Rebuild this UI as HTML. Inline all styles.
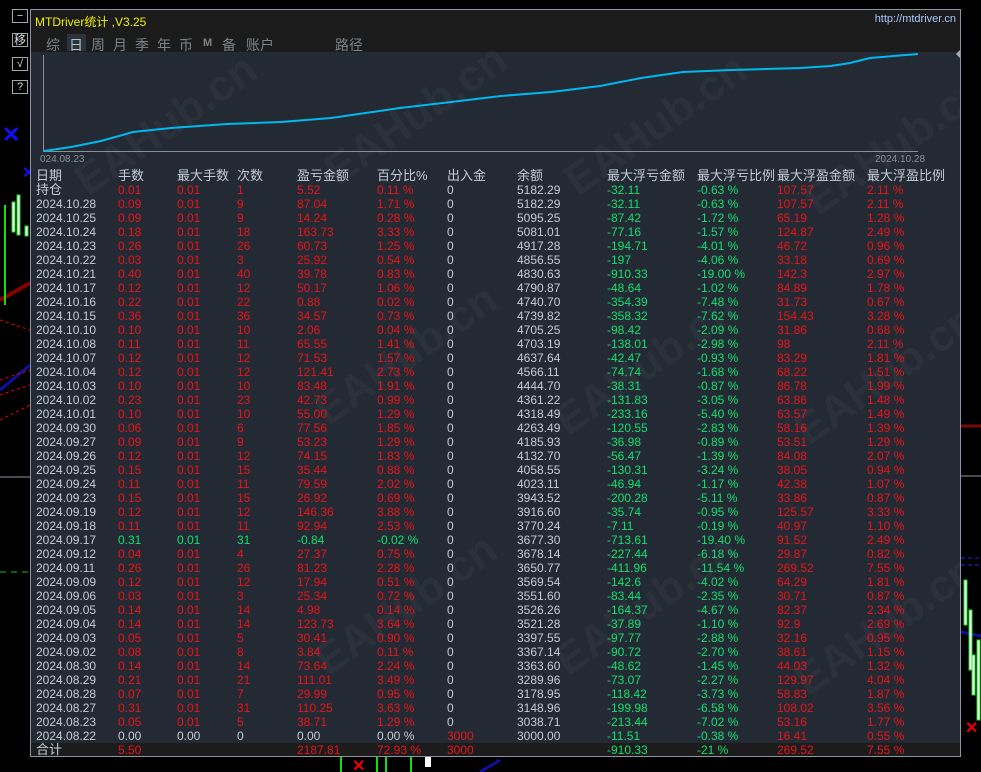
<!DOCTYPE html>
<html><head><meta charset="utf-8">
<style>
*{margin:0;padding:0;box-sizing:border-box}
body{width:981px;height:772px;background:#000;position:relative;overflow:hidden;font-family:"Liberation Sans","Noto Sans CJK SC",sans-serif}
.abs{position:absolute}
#panel{position:absolute;left:30px;top:9px;width:931px;height:748px;border:1px solid #8a94a6;background:#232a33;overflow:hidden}
#title{position:absolute;left:0;top:0;width:929px;height:42px;background:#1b1b1b}
#foot{position:absolute;left:0;top:733px;width:929px;height:14px;background:#1c1c1c}
.r{position:absolute;left:0;height:14px;width:929px;font-size:12px;line-height:14px;color:#c3ccd8}
.r span{position:absolute;top:0;white-space:nowrap}
.a{left:5px}.b{left:87px}.c{left:146px}.d{left:206px}.e{left:266px}.f{left:346px}.g{left:416px}.h{left:486px}.i{left:576px}.j{left:666px}.k{left:746px}.l{left:836px}
.R{color:#e8141a}.G{color:#10e070}
.hd{font-size:13px}
.tab{position:absolute;top:25px;font-size:14px;color:#7d838b}
.wm{position:absolute;font-size:44px;font-weight:bold;color:rgba(255,255,255,0.035);transform:rotate(-35deg);white-space:nowrap;font-family:"Liberation Sans",sans-serif}
.btn{position:absolute;left:12px;width:16px;height:14px;border:1px solid #9aa;background:#000;color:#ddd;font-size:11px;line-height:12px;text-align:center}
</style></head><body>
<svg class="abs" style="left:0;top:0" width="981" height="772">
<line x1="0" y1="477" x2="30" y2="477" stroke="#8a94a6"/>
<line x1="961" y1="476" x2="981" y2="476" stroke="#8a94a6"/>
<line x1="961" y1="426" x2="981" y2="426" stroke="#7a0a0a" stroke-width="3"/>
<line x1="0" y1="572" x2="30" y2="572" stroke="#10c010" stroke-dasharray="6,5"/>
<line x1="0" y1="300" x2="30" y2="283" stroke="#800" stroke-width="4"/>
<line x1="0" y1="390" x2="30" y2="365" stroke="#1010a0" stroke-width="3"/>
<line x1="0" y1="320" x2="30" y2="330" stroke="#e00" stroke-dasharray="3,3"/>
<line x1="0" y1="380" x2="30" y2="370" stroke="#e00" stroke-dasharray="3,3"/>
<line x1="0" y1="395" x2="30" y2="385" stroke="#e00" stroke-dasharray="3,3"/>
<line x1="0" y1="420" x2="30" y2="405" stroke="#e00" stroke-dasharray="3,3"/>
<line x1="961" y1="632" x2="981" y2="636" stroke="#1010a0" stroke-width="3"/>
<line x1="961" y1="558" x2="981" y2="558" stroke="#22f" stroke-dasharray="4,3"/>
<line x1="961" y1="565" x2="981" y2="565" stroke="#22f" stroke-dasharray="4,3"/>
<rect x="4" y="205" width="2" height="100" fill="#10e010"/>
<rect x="12" y="202" width="3" height="30" fill="#fff" stroke="#10e010"/>
<rect x="17" y="195" width="3" height="40" fill="#fff" stroke="#10e010"/>
<rect x="25" y="226" width="3" height="10" fill="#fff" stroke="#10e010"/>
<rect x="964" y="580" width="3" height="45" fill="#fff" stroke="#10e010"/>
<rect x="969" y="610" width="3" height="60" fill="#fff" stroke="#10e010"/>
<rect x="972" y="655" width="3" height="40" fill="#fff" stroke="#10e010"/>
<rect x="977" y="640" width="3" height="80" fill="#fff" stroke="#10e010"/>
<rect x="376" y="757" width="2" height="15" fill="#10e010"/><rect x="385" y="757" width="2" height="15" fill="#10e010"/>
<rect x="410" y="757" width="2" height="15" fill="#10e010"/><rect x="425" y="757" width="6" height="10" fill="#fff"/>
<rect x="340" y="757" width="2" height="15" fill="#10e010"/>
<text x="352" y="771" fill="#e00" font-size="16" font-weight="bold" font-family="Liberation Sans">✕</text>
<line x1="480" y1="772" x2="500" y2="760" stroke="#1010a0" stroke-width="3"/>
<text x="2" y="142" fill="#1010ff" font-size="22" font-weight="bold" font-family="Liberation Sans">✕</text>
<text x="22" y="178" fill="#1010ff" font-size="16" font-weight="bold" font-family="Liberation Sans">✕</text>
<text x="965" y="733" fill="#e00" font-size="16" font-weight="bold" font-family="Liberation Sans">✕</text>
</svg>
<div class="btn" style="top:9px">−</div>
<div class="btn" style="top:33px;font-size:12px">移</div>
<div class="btn" style="top:57px">√</div>
<div class="btn" style="top:80px">?</div>

<div id="panel">
<div id="title">
<div class="abs" style="left:4px;top:3px;font-size:12px;color:#f0f000">MTDriver统计 ,V3.25</div>
<div class="abs" style="right:4px;top:3px;font-size:11px;color:#a8c8ff">http://mtdriver.cn</div>
<div class="abs" style="left:36px;top:24px;width:19px;height:17px;background:#2b333d"></div>
<span class="tab" style="left:15px">综</span><span class="tab" style="left:38px;color:#b8bec6">日</span><span class="tab" style="left:60px">周</span><span class="tab" style="left:82px">月</span><span class="tab" style="left:104px">季</span><span class="tab" style="left:126px">年</span><span class="tab" style="left:148px">币</span><span class="tab" style="left:172px;font-size:11px;top:27px;font-weight:bold">M</span><span class="tab" style="left:191px">备</span><span class="tab" style="left:215px">账户</span><span class="tab" style="left:304px">路径</span>
</div>
<div class="wm" style="left:30px;top:90px">EAHub.cn</div>
<div class="wm" style="left:280px;top:80px">EAHub.cn</div>
<div class="wm" style="left:520px;top:90px">EAHub.cn</div>
<div class="wm" style="left:760px;top:110px">EAHub.cn</div>
<div class="wm" style="left:270px;top:320px">EAHub.cn</div>
<div class="wm" style="left:510px;top:330px">EAHub.cn</div>
<div class="wm" style="left:750px;top:340px">EAHub.cn</div>
<div class="wm" style="left:270px;top:570px">EAHub.cn</div>
<div class="wm" style="left:510px;top:570px">EAHub.cn</div>
<div class="wm" style="left:750px;top:590px">EAHub.cn</div>
<svg class="abs" style="left:0;top:0" width="929" height="160">
<line x1="12.5" y1="45" x2="12.5" y2="142" stroke="#8a8f96"/>
<line x1="12" y1="141.5" x2="887" y2="141.5" stroke="#8a8f96"/>
<polyline fill="none" stroke="#00b8f0" stroke-width="2" points="13,141 40,137 70,131 102,122 140,118 196,114 250,112 300,108 369,98 420,92 470,86 520,82 569,76 610,68 652,62 700,60 769,58 800,56 819,53 839,48 887,44"/>
<path d="M931,38 l-6,6 l6,6z" fill="#aab"/>
<text x="9" y="152" fill="#8a8f96" font-size="10" font-family="Liberation Sans">024.08.23</text>
<text x="844" y="152" fill="#8a8f96" font-size="10" font-family="Liberation Sans">2024.10.28</text>
</svg>
<div id="foot"></div>

<div class="r hd" style="top:159px"><span class="a">日期</span><span class="b">手数</span><span class="c">最大手数</span><span class="d">次数</span><span class="e">盈亏金额</span><span class="f">百分比%</span><span class="g">出入金</span><span class="h">余额</span><span class="i">最大浮亏金额</span><span class="j">最大浮亏比例</span><span class="k">最大浮盈金额</span><span class="l">最大浮盈比例</span></div>
<div class="r" style="top:173px"><span class="a hd">持仓</span><span class="b R">0.01</span><span class="c R">0.01</span><span class="d R">1</span><span class="e R">5.52</span><span class="f R">0.11 %</span><span class="g">0</span><span class="h">5182.29</span><span class="i G">-32.11</span><span class="j G">-0.63 %</span><span class="k R">107.57</span><span class="l R">2.11 %</span></div>
<div class="r" style="top:187px"><span class="a">2024.10.28</span><span class="b R">0.09</span><span class="c R">0.01</span><span class="d R">9</span><span class="e R">87.04</span><span class="f R">1.71 %</span><span class="g">0</span><span class="h">5182.29</span><span class="i G">-32.11</span><span class="j G">-0.63 %</span><span class="k R">107.57</span><span class="l R">2.11 %</span></div>
<div class="r" style="top:201px"><span class="a">2024.10.25</span><span class="b R">0.09</span><span class="c R">0.01</span><span class="d R">9</span><span class="e R">14.24</span><span class="f R">0.28 %</span><span class="g">0</span><span class="h">5095.25</span><span class="i G">-87.42</span><span class="j G">-1.72 %</span><span class="k R">65.19</span><span class="l R">1.28 %</span></div>
<div class="r" style="top:215px"><span class="a">2024.10.24</span><span class="b R">0.18</span><span class="c R">0.01</span><span class="d R">18</span><span class="e R">163.73</span><span class="f R">3.33 %</span><span class="g">0</span><span class="h">5081.01</span><span class="i G">-77.16</span><span class="j G">-1.57 %</span><span class="k R">124.87</span><span class="l R">2.49 %</span></div>
<div class="r" style="top:229px"><span class="a">2024.10.23</span><span class="b R">0.26</span><span class="c R">0.01</span><span class="d R">26</span><span class="e R">60.73</span><span class="f R">1.25 %</span><span class="g">0</span><span class="h">4917.28</span><span class="i G">-194.71</span><span class="j G">-4.01 %</span><span class="k R">46.72</span><span class="l R">0.96 %</span></div>
<div class="r" style="top:243px"><span class="a">2024.10.22</span><span class="b R">0.03</span><span class="c R">0.01</span><span class="d R">3</span><span class="e R">25.92</span><span class="f R">0.54 %</span><span class="g">0</span><span class="h">4856.55</span><span class="i G">-197</span><span class="j G">-4.06 %</span><span class="k R">33.18</span><span class="l R">0.69 %</span></div>
<div class="r" style="top:257px"><span class="a">2024.10.21</span><span class="b R">0.40</span><span class="c R">0.01</span><span class="d R">40</span><span class="e R">39.78</span><span class="f R">0.83 %</span><span class="g">0</span><span class="h">4830.63</span><span class="i G">-910.33</span><span class="j G">-19.00 %</span><span class="k R">142.3</span><span class="l R">2.97 %</span></div>
<div class="r" style="top:271px"><span class="a">2024.10.17</span><span class="b R">0.12</span><span class="c R">0.01</span><span class="d R">12</span><span class="e R">50.17</span><span class="f R">1.06 %</span><span class="g">0</span><span class="h">4790.87</span><span class="i G">-48.64</span><span class="j G">-1.02 %</span><span class="k R">84.89</span><span class="l R">1.78 %</span></div>
<div class="r" style="top:285px"><span class="a">2024.10.16</span><span class="b R">0.22</span><span class="c R">0.01</span><span class="d R">22</span><span class="e R">0.88</span><span class="f R">0.02 %</span><span class="g">0</span><span class="h">4740.70</span><span class="i G">-354.39</span><span class="j G">-7.48 %</span><span class="k R">31.73</span><span class="l R">0.67 %</span></div>
<div class="r" style="top:299px"><span class="a">2024.10.15</span><span class="b R">0.36</span><span class="c R">0.01</span><span class="d R">36</span><span class="e R">34.57</span><span class="f R">0.73 %</span><span class="g">0</span><span class="h">4739.82</span><span class="i G">-358.32</span><span class="j G">-7.62 %</span><span class="k R">154.43</span><span class="l R">3.28 %</span></div>
<div class="r" style="top:313px"><span class="a">2024.10.10</span><span class="b R">0.10</span><span class="c R">0.01</span><span class="d R">10</span><span class="e R">2.06</span><span class="f R">0.04 %</span><span class="g">0</span><span class="h">4705.25</span><span class="i G">-98.42</span><span class="j G">-2.09 %</span><span class="k R">31.86</span><span class="l R">0.68 %</span></div>
<div class="r" style="top:327px"><span class="a">2024.10.08</span><span class="b R">0.11</span><span class="c R">0.01</span><span class="d R">11</span><span class="e R">65.55</span><span class="f R">1.41 %</span><span class="g">0</span><span class="h">4703.19</span><span class="i G">-138.01</span><span class="j G">-2.98 %</span><span class="k R">98</span><span class="l R">2.11 %</span></div>
<div class="r" style="top:341px"><span class="a">2024.10.07</span><span class="b R">0.12</span><span class="c R">0.01</span><span class="d R">12</span><span class="e R">71.53</span><span class="f R">1.57 %</span><span class="g">0</span><span class="h">4637.64</span><span class="i G">-42.47</span><span class="j G">-0.93 %</span><span class="k R">83.29</span><span class="l R">1.81 %</span></div>
<div class="r" style="top:355px"><span class="a">2024.10.04</span><span class="b R">0.12</span><span class="c R">0.01</span><span class="d R">12</span><span class="e R">121.41</span><span class="f R">2.73 %</span><span class="g">0</span><span class="h">4566.11</span><span class="i G">-74.74</span><span class="j G">-1.68 %</span><span class="k R">68.22</span><span class="l R">1.51 %</span></div>
<div class="r" style="top:369px"><span class="a">2024.10.03</span><span class="b R">0.10</span><span class="c R">0.01</span><span class="d R">10</span><span class="e R">83.48</span><span class="f R">1.91 %</span><span class="g">0</span><span class="h">4444.70</span><span class="i G">-38.31</span><span class="j G">-0.87 %</span><span class="k R">86.78</span><span class="l R">1.99 %</span></div>
<div class="r" style="top:383px"><span class="a">2024.10.02</span><span class="b R">0.23</span><span class="c R">0.01</span><span class="d R">23</span><span class="e R">42.73</span><span class="f R">0.99 %</span><span class="g">0</span><span class="h">4361.22</span><span class="i G">-131.83</span><span class="j G">-3.05 %</span><span class="k R">63.86</span><span class="l R">1.48 %</span></div>
<div class="r" style="top:397px"><span class="a">2024.10.01</span><span class="b R">0.10</span><span class="c R">0.01</span><span class="d R">10</span><span class="e R">55.00</span><span class="f R">1.29 %</span><span class="g">0</span><span class="h">4318.49</span><span class="i G">-233.16</span><span class="j G">-5.40 %</span><span class="k R">63.57</span><span class="l R">1.49 %</span></div>
<div class="r" style="top:411px"><span class="a">2024.09.30</span><span class="b R">0.06</span><span class="c R">0.01</span><span class="d R">6</span><span class="e R">77.56</span><span class="f R">1.85 %</span><span class="g">0</span><span class="h">4263.49</span><span class="i G">-120.55</span><span class="j G">-2.83 %</span><span class="k R">58.16</span><span class="l R">1.39 %</span></div>
<div class="r" style="top:425px"><span class="a">2024.09.27</span><span class="b R">0.09</span><span class="c R">0.01</span><span class="d R">9</span><span class="e R">53.23</span><span class="f R">1.29 %</span><span class="g">0</span><span class="h">4185.93</span><span class="i G">-36.98</span><span class="j G">-0.89 %</span><span class="k R">53.51</span><span class="l R">1.29 %</span></div>
<div class="r" style="top:439px"><span class="a">2024.09.26</span><span class="b R">0.12</span><span class="c R">0.01</span><span class="d R">12</span><span class="e R">74.15</span><span class="f R">1.83 %</span><span class="g">0</span><span class="h">4132.70</span><span class="i G">-56.47</span><span class="j G">-1.39 %</span><span class="k R">84.08</span><span class="l R">2.07 %</span></div>
<div class="r" style="top:453px"><span class="a">2024.09.25</span><span class="b R">0.15</span><span class="c R">0.01</span><span class="d R">15</span><span class="e R">35.44</span><span class="f R">0.88 %</span><span class="g">0</span><span class="h">4058.55</span><span class="i G">-130.31</span><span class="j G">-3.24 %</span><span class="k R">38.05</span><span class="l R">0.94 %</span></div>
<div class="r" style="top:467px"><span class="a">2024.09.24</span><span class="b R">0.11</span><span class="c R">0.01</span><span class="d R">11</span><span class="e R">79.59</span><span class="f R">2.02 %</span><span class="g">0</span><span class="h">4023.11</span><span class="i G">-46.94</span><span class="j G">-1.17 %</span><span class="k R">42.38</span><span class="l R">1.07 %</span></div>
<div class="r" style="top:481px"><span class="a">2024.09.23</span><span class="b R">0.15</span><span class="c R">0.01</span><span class="d R">15</span><span class="e R">26.92</span><span class="f R">0.69 %</span><span class="g">0</span><span class="h">3943.52</span><span class="i G">-200.28</span><span class="j G">-5.11 %</span><span class="k R">33.86</span><span class="l R">0.87 %</span></div>
<div class="r" style="top:495px"><span class="a">2024.09.19</span><span class="b R">0.12</span><span class="c R">0.01</span><span class="d R">12</span><span class="e R">146.36</span><span class="f R">3.88 %</span><span class="g">0</span><span class="h">3916.60</span><span class="i G">-35.74</span><span class="j G">-0.95 %</span><span class="k R">125.57</span><span class="l R">3.33 %</span></div>
<div class="r" style="top:509px"><span class="a">2024.09.18</span><span class="b R">0.11</span><span class="c R">0.01</span><span class="d R">11</span><span class="e R">92.94</span><span class="f R">2.53 %</span><span class="g">0</span><span class="h">3770.24</span><span class="i G">-7.11</span><span class="j G">-0.19 %</span><span class="k R">40.97</span><span class="l R">1.10 %</span></div>
<div class="r" style="top:523px"><span class="a">2024.09.17</span><span class="b G">0.31</span><span class="c G">0.01</span><span class="d G">31</span><span class="e G">-0.84</span><span class="f G">-0.02 %</span><span class="g">0</span><span class="h">3677.30</span><span class="i G">-713.61</span><span class="j G">-19.40 %</span><span class="k R">91.52</span><span class="l R">2.49 %</span></div>
<div class="r" style="top:537px"><span class="a">2024.09.12</span><span class="b R">0.04</span><span class="c R">0.01</span><span class="d R">4</span><span class="e R">27.37</span><span class="f R">0.75 %</span><span class="g">0</span><span class="h">3678.14</span><span class="i G">-227.44</span><span class="j G">-6.18 %</span><span class="k R">29.87</span><span class="l R">0.82 %</span></div>
<div class="r" style="top:551px"><span class="a">2024.09.11</span><span class="b R">0.26</span><span class="c R">0.01</span><span class="d R">26</span><span class="e R">81.23</span><span class="f R">2.28 %</span><span class="g">0</span><span class="h">3650.77</span><span class="i G">-411.96</span><span class="j G">-11.54 %</span><span class="k R">269.52</span><span class="l R">7.55 %</span></div>
<div class="r" style="top:565px"><span class="a">2024.09.09</span><span class="b R">0.12</span><span class="c R">0.01</span><span class="d R">12</span><span class="e R">17.94</span><span class="f R">0.51 %</span><span class="g">0</span><span class="h">3569.54</span><span class="i G">-142.6</span><span class="j G">-4.02 %</span><span class="k R">64.29</span><span class="l R">1.81 %</span></div>
<div class="r" style="top:579px"><span class="a">2024.09.06</span><span class="b R">0.03</span><span class="c R">0.01</span><span class="d R">3</span><span class="e R">25.34</span><span class="f R">0.72 %</span><span class="g">0</span><span class="h">3551.60</span><span class="i G">-83.44</span><span class="j G">-2.35 %</span><span class="k R">30.71</span><span class="l R">0.87 %</span></div>
<div class="r" style="top:593px"><span class="a">2024.09.05</span><span class="b R">0.14</span><span class="c R">0.01</span><span class="d R">14</span><span class="e R">4.98</span><span class="f R">0.14 %</span><span class="g">0</span><span class="h">3526.26</span><span class="i G">-164.37</span><span class="j G">-4.67 %</span><span class="k R">82.37</span><span class="l R">2.34 %</span></div>
<div class="r" style="top:607px"><span class="a">2024.09.04</span><span class="b R">0.14</span><span class="c R">0.01</span><span class="d R">14</span><span class="e R">123.73</span><span class="f R">3.64 %</span><span class="g">0</span><span class="h">3521.28</span><span class="i G">-37.89</span><span class="j G">-1.10 %</span><span class="k R">92.9</span><span class="l R">2.69 %</span></div>
<div class="r" style="top:621px"><span class="a">2024.09.03</span><span class="b R">0.05</span><span class="c R">0.01</span><span class="d R">5</span><span class="e R">30.41</span><span class="f R">0.90 %</span><span class="g">0</span><span class="h">3397.55</span><span class="i G">-97.77</span><span class="j G">-2.88 %</span><span class="k R">32.16</span><span class="l R">0.95 %</span></div>
<div class="r" style="top:635px"><span class="a">2024.09.02</span><span class="b R">0.08</span><span class="c R">0.01</span><span class="d R">8</span><span class="e R">3.84</span><span class="f R">0.11 %</span><span class="g">0</span><span class="h">3367.14</span><span class="i G">-90.72</span><span class="j G">-2.70 %</span><span class="k R">38.61</span><span class="l R">1.15 %</span></div>
<div class="r" style="top:649px"><span class="a">2024.08.30</span><span class="b R">0.14</span><span class="c R">0.01</span><span class="d R">14</span><span class="e R">73.64</span><span class="f R">2.24 %</span><span class="g">0</span><span class="h">3363.60</span><span class="i G">-48.62</span><span class="j G">-1.45 %</span><span class="k R">44.03</span><span class="l R">1.32 %</span></div>
<div class="r" style="top:663px"><span class="a">2024.08.29</span><span class="b R">0.21</span><span class="c R">0.01</span><span class="d R">21</span><span class="e R">111.01</span><span class="f R">3.49 %</span><span class="g">0</span><span class="h">3289.96</span><span class="i G">-73.07</span><span class="j G">-2.27 %</span><span class="k R">129.97</span><span class="l R">4.04 %</span></div>
<div class="r" style="top:677px"><span class="a">2024.08.28</span><span class="b R">0.07</span><span class="c R">0.01</span><span class="d R">7</span><span class="e R">29.99</span><span class="f R">0.95 %</span><span class="g">0</span><span class="h">3178.95</span><span class="i G">-118.42</span><span class="j G">-3.73 %</span><span class="k R">58.83</span><span class="l R">1.87 %</span></div>
<div class="r" style="top:691px"><span class="a">2024.08.27</span><span class="b R">0.31</span><span class="c R">0.01</span><span class="d R">31</span><span class="e R">110.25</span><span class="f R">3.63 %</span><span class="g">0</span><span class="h">3148.96</span><span class="i G">-199.98</span><span class="j G">-6.58 %</span><span class="k R">108.02</span><span class="l R">3.56 %</span></div>
<div class="r" style="top:705px"><span class="a">2024.08.23</span><span class="b R">0.05</span><span class="c R">0.01</span><span class="d R">5</span><span class="e R">38.71</span><span class="f R">1.29 %</span><span class="g">0</span><span class="h">3038.71</span><span class="i G">-213.44</span><span class="j G">-7.02 %</span><span class="k R">53.16</span><span class="l R">1.77 %</span></div>
<div class="r" style="top:719px"><span class="a">2024.08.22</span><span class="b">0.00</span><span class="c">0.00</span><span class="d">0</span><span class="e">0.00</span><span class="f">0.00 %</span><span class="g R">3000</span><span class="h">3000.00</span><span class="i G">-11.51</span><span class="j G">-0.38 %</span><span class="k R">16.41</span><span class="l R">0.55 %</span></div>
<div class="r" style="top:733px"><span class="a hd">合计</span><span class="b R">5.50</span><span class="e R">2187.81</span><span class="f R">72.93 %</span><span class="g R">3000</span><span class="i G">-910.33</span><span class="j G">-21 %</span><span class="k R">269.52</span><span class="l R">7.55 %</span></div>
</div>
</body></html>
